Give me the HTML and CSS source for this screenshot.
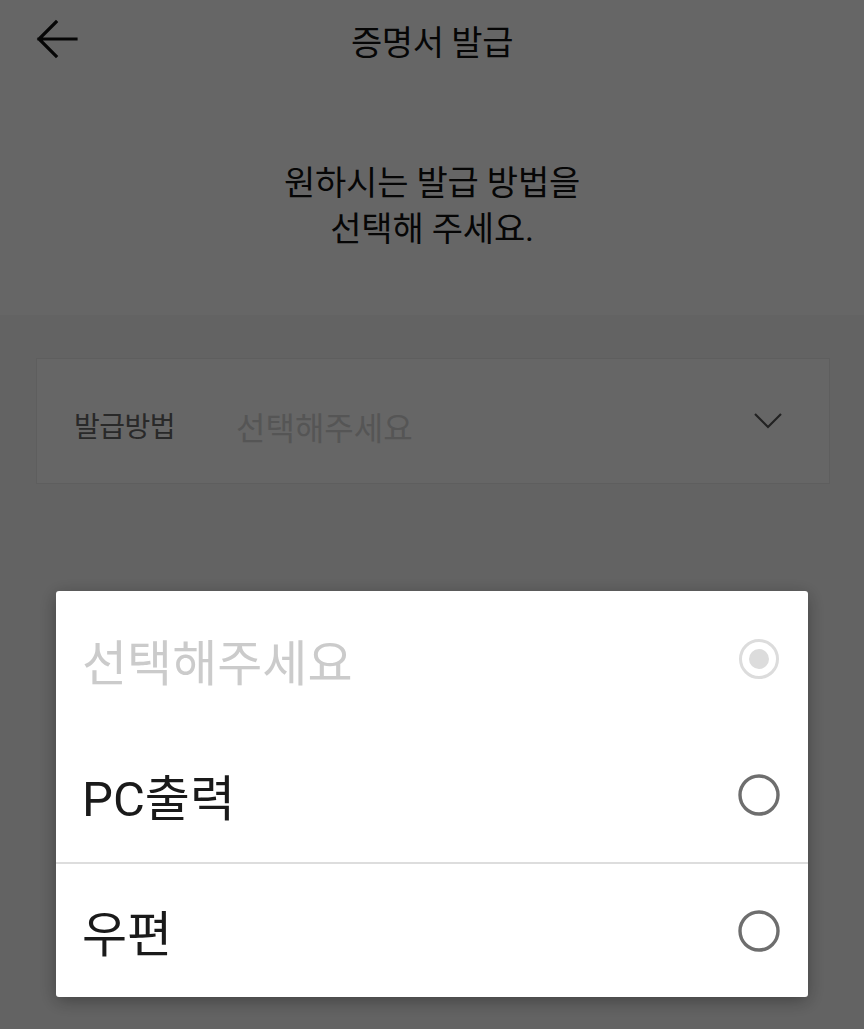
FILE: index.html
```html
<!DOCTYPE html>
<html lang="ko">
<head>
  <meta charset="UTF-8" />
  <meta name="viewport" content="width=device-width, initial-scale=1.0" />
  <title>증명서 발급</title>
  <link rel="stylesheet" href="styles.css">
</head>
<body>
  <header class="topbar">
    <button class="back" aria-label="뒤로">
      <svg width="48" height="48" viewBox="0 0 48 48" fill="none" stroke="#111" stroke-width="3.2" stroke-linecap="square">
        <path d="M45 24 H8 M25 7 L8 24 L25 41" />
      </svg>
    </button>
    <h1 class="title">증명서 발급</h1>
    <span></span>
  </header>

  <section class="intro">
    <p>원하시는 발급 방법을<br>선택해 주세요.</p>
  </section>

  <main class="content">
    <div class="field">
      <span class="field-label">발급방법</span>
      <span class="field-value">선택해주세요</span>
      <svg class="chevron" width="30" height="18" viewBox="0 0 30 18" fill="none" stroke="#555" stroke-width="2.2">
        <path d="M2 2 L15 15 L28 2" />
      </svg>
    </div>
  </main>

  <div class="overlay">
    <ul class="dialog">
      <li class="option disabled">
        <span>선택해주세요</span>
        <svg width="44" height="44" viewBox="0 0 44 44">
          <circle cx="22" cy="22" r="18.5" fill="none" stroke="#dcdcdc" stroke-width="3" />
          <circle cx="22" cy="22" r="10" fill="#dcdcdc" />
        </svg>
      </li>
      <li class="option">
        <span>PC출력</span>
        <svg width="44" height="44" viewBox="0 0 44 44">
          <circle cx="22" cy="22" r="19" fill="none" stroke="#6e6e6e" stroke-width="3.4" />
        </svg>
      </li>
      <li class="option divided">
        <span>우편</span>
        <svg width="44" height="44" viewBox="0 0 44 44">
          <circle cx="22" cy="22" r="19" fill="none" stroke="#6e6e6e" stroke-width="3.4" />
        </svg>
      </li>
    </ul>
  </div>
</body>
</html>
```

FILE: styles.css
```css
* { box-sizing: border-box; }
html, body { margin: 0; padding: 0; }
body { font-family: Roboto, "Noto Sans CJK KR", sans-serif; background: #f8f8f8; color: #111; min-height: 1029px; }

.topbar { display: grid; grid-template-columns: 1fr auto 1fr; align-items: center; height: 82px; background: #fff; padding: 0 31px; }
.back { justify-self: start; background: none; border: none; padding: 0; width: 48px; height: 48px; margin-top: -4px; cursor: pointer; }
.back svg { display: block; }
.title { margin: 0; font-size: 34px; font-weight: 400; color: #111; letter-spacing: -0.5px; margin-top: -2px; }

.intro { background: #fff; padding: 78px 0 63px; text-align: center; }
.intro p { margin: 0; font-size: 34px; line-height: 46px; color: #111; letter-spacing: -0.2px; }

.content { padding: 43px 34px 0 36px; }
.field { display: flex; align-items: center; height: 126px; background: #fff; border: 1px solid #ececec; padding: 0 46px 0 37px; }
.field-label { font-size: 28px; color: #666; width: 162px; padding-top: 8px; letter-spacing: -0.5px; }
.field-value { font-size: 32px; color: #d4d4d4; flex: 1; padding-top: 10px; }
.chevron { display: block; }

.overlay { position: fixed; inset: 0; background: rgba(0, 0, 0, 0.6); padding: 591px 56px 0; }
.dialog { list-style: none; margin: 0; padding: 0; background: #fff; border-radius: 3px; box-shadow: 0 4px 18px rgba(0, 0, 0, 0.35); }
.option { display: flex; align-items: center; justify-content: space-between; height: 135px; padding: 0 27px 0 26px; font-size: 49px; color: #1a1a1a; }
.option:first-child { height: 136px; }
.option.disabled { color: #cbcbcb; }
.option.divided { border-top: 2px solid #dddddd; height: 135px; }
.option svg { display: block; }
```
